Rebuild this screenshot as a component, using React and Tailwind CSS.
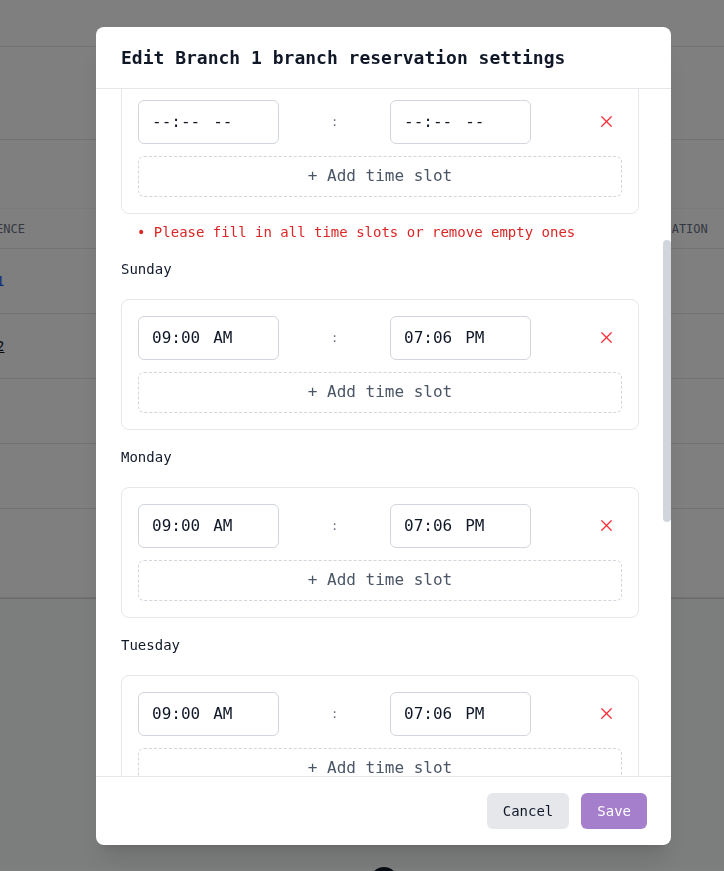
import { useLayoutEffect, useRef, useState } from 'react';
import { X } from 'lucide-react';

const DAYS = [
  { name: 'Saturday', from: null, to: null },
  { name: 'Sunday', from: ['09:00', 'AM'], to: ['07:06', 'PM'] },
  { name: 'Monday', from: ['09:00', 'AM'], to: ['07:06', 'PM'] },
  { name: 'Tuesday', from: ['09:00', 'AM'], to: ['07:06', 'PM'] },
  { name: 'Wednesday', from: ['09:00', 'AM'], to: ['07:06', 'PM'] },
  { name: 'Thursday', from: ['09:00', 'AM'], to: ['07:06', 'PM'] },
  { name: 'Friday', from: ['09:00', 'AM'], to: ['07:06', 'PM'] },
];

const ROWS = [
  { ref: 'Branch 1', link: true },
  { ref: 'Branch 2', link: false },
  { ref: '', link: false },
  { ref: '', link: false },
  { ref: '', link: false, tall: true },
];

function TimeBox({ value }) {
  const [time, period] = value || ['--:--', '--'];
  return (
    <div className="w-[141px] h-11 flex items-center px-[13px] border border-gray-300 rounded-md text-base text-gray-900 bg-white">
      <span>{time}</span>
      <span className="ml-[13px]">{period}</span>
    </div>
  );
}

function DayCard({ day, cardRef }) {
  return (
    <div ref={cardRef} className="border border-gray-200 rounded-lg p-4 flex flex-col gap-3">
      <div className="flex items-center">
        <TimeBox value={day.from} />
        <span className="w-[111px] text-center text-xs text-gray-500">:</span>
        <TimeBox value={day.to} />
        <div className="flex-1 flex justify-end">
          <button className="w-8 h-8 flex items-center justify-center text-red-500">
            <X size={19} strokeWidth={1.6} />
          </button>
        </div>
      </div>
      <button className="w-full h-[41px] flex items-center justify-center border border-dashed border-gray-300 rounded-md text-base text-gray-600">
        + Add time slot
      </button>
    </div>
  );
}

function BackgroundPage() {
  return (
    <div className="min-h-screen bg-white text-gray-900">
      <div className="h-[47px] border-b border-gray-200" />
      <div className="h-[93px] border-b border-gray-200" />
      <div className="mt-[68px] border-t border-gray-100">
        <div className="h-10 flex items-center text-xs uppercase text-gray-500 border-b border-gray-200">
          <span className="ml-[-40px] w-[690px]">Reference</span>
          <span>Location</span>
        </div>
        {ROWS.map((r, i) => (
          <div
            key={i}
            className={`${r.tall ? 'h-[89px]' : 'h-[65px]'} flex items-center border-b border-gray-200 text-sm`}
          >
            <span className={`ml-[-63px] ${r.link ? 'text-blue-600' : 'text-gray-900 underline'}`}>{r.ref}</span>
          </div>
        ))}
        <div className="h-px bg-gray-300" />
      </div>
      <div className="h-[269px] bg-gray-50 flex items-end justify-center">
        <div className="w-7 h-7 rounded-full bg-gray-900 translate-y-[27px] ml-[44px]" />
      </div>
    </div>
  );
}

export default function App() {
  const bodyRef = useRef(null);
  const firstCardRef = useRef(null);
  const [thumb, setThumb] = useState({ top: 0, height: 0 });

  useLayoutEffect(() => {
    const body = bodyRef.current;
    const card = firstCardRef.current;
    if (!body || !card) return;
    body.scrollTop = card.offsetTop + card.offsetHeight - 125;
    const { scrollTop, scrollHeight, clientHeight } = body;
    setThumb({
      top: (scrollTop / scrollHeight) * clientHeight,
      height: (clientHeight * clientHeight) / scrollHeight,
    });
  }, []);

  return (
    <div className="relative font-['DejaVu_Sans_Mono',monospace]">
      <BackgroundPage />

      <div className="fixed inset-0 bg-black/50 flex items-center">
        <div className="ml-[96px] w-[575px] h-[818px] bg-white rounded-lg shadow-xl flex flex-col overflow-hidden">
          {/* Header */}
          <div className="pl-[25px] pr-6 pt-[17px] pb-4 border-b border-gray-200">
            <h2 className="text-lg leading-7 font-bold text-gray-900">Edit Branch 1 branch reservation settings</h2>
          </div>

          {/* Body */}
          <div className="relative flex-1 min-h-0 flex">
            <div ref={bodyRef} className="relative flex-1 overflow-hidden pl-[25px] pr-8 py-6">
              <div className="flex flex-col gap-[17px]">
                <div className="flex items-center justify-between h-10">
                  <span className="text-sm text-gray-900">Enable online reservations</span>
                  <span className="w-11 h-6 rounded-full bg-purple-500 flex items-center justify-end px-0.5">
                    <span className="w-5 h-5 rounded-full bg-white" />
                  </span>
                </div>
                <div className="grid grid-cols-2 gap-4">
                  <div>
                    <p className="text-sm text-gray-900 mb-2">Max guests</p>
                    <div className="h-11 border border-gray-300 rounded-md px-3 flex items-center">8</div>
                  </div>
                  <div>
                    <p className="text-sm text-gray-900 mb-2">Slot duration (min)</p>
                    <div className="h-11 border border-gray-300 rounded-md px-3 flex items-center">30</div>
                  </div>
                </div>
                <div>
                  <p className="text-sm text-gray-900 mb-2">Advance booking (days)</p>
                  <div className="h-11 border border-gray-300 rounded-md px-3 flex items-center">14</div>
                </div>
                <div>
                  <p className="text-base font-bold text-gray-900 leading-7">Working hours</p>
                  <p className="text-sm text-gray-500">Set available time slots for each day</p>
                </div>

                {DAYS.map((d, i) => (
                  <div key={d.name}>
                    <p className="text-sm leading-5 text-gray-900 mb-5">{d.name}</p>
                    <DayCard day={d} cardRef={i === 0 ? firstCardRef : undefined} />
                    {i === 0 && (
                      <p className="mt-2 ml-4 text-sm text-[#dc2626]">• Please fill in all time slots or remove empty ones</p>
                    )}
                  </div>
                ))}
              </div>
            </div>
            {/* scrollbar thumb */}
            <div
              className="absolute right-0 w-2 rounded-full bg-gray-300"
              style={{ top: thumb.top, height: thumb.height }}
            />
          </div>

          {/* Footer */}
          <div className="px-6 py-4 border-t border-gray-200 flex justify-end gap-3">
            <button className="px-4 py-2 text-sm leading-5 rounded-md bg-gray-200 text-gray-900">Cancel</button>
            <button className="px-4 py-2 text-sm leading-5 rounded-md bg-[#a57fcc] text-white">Save</button>
          </div>
        </div>
      </div>
    </div>
  );
}
